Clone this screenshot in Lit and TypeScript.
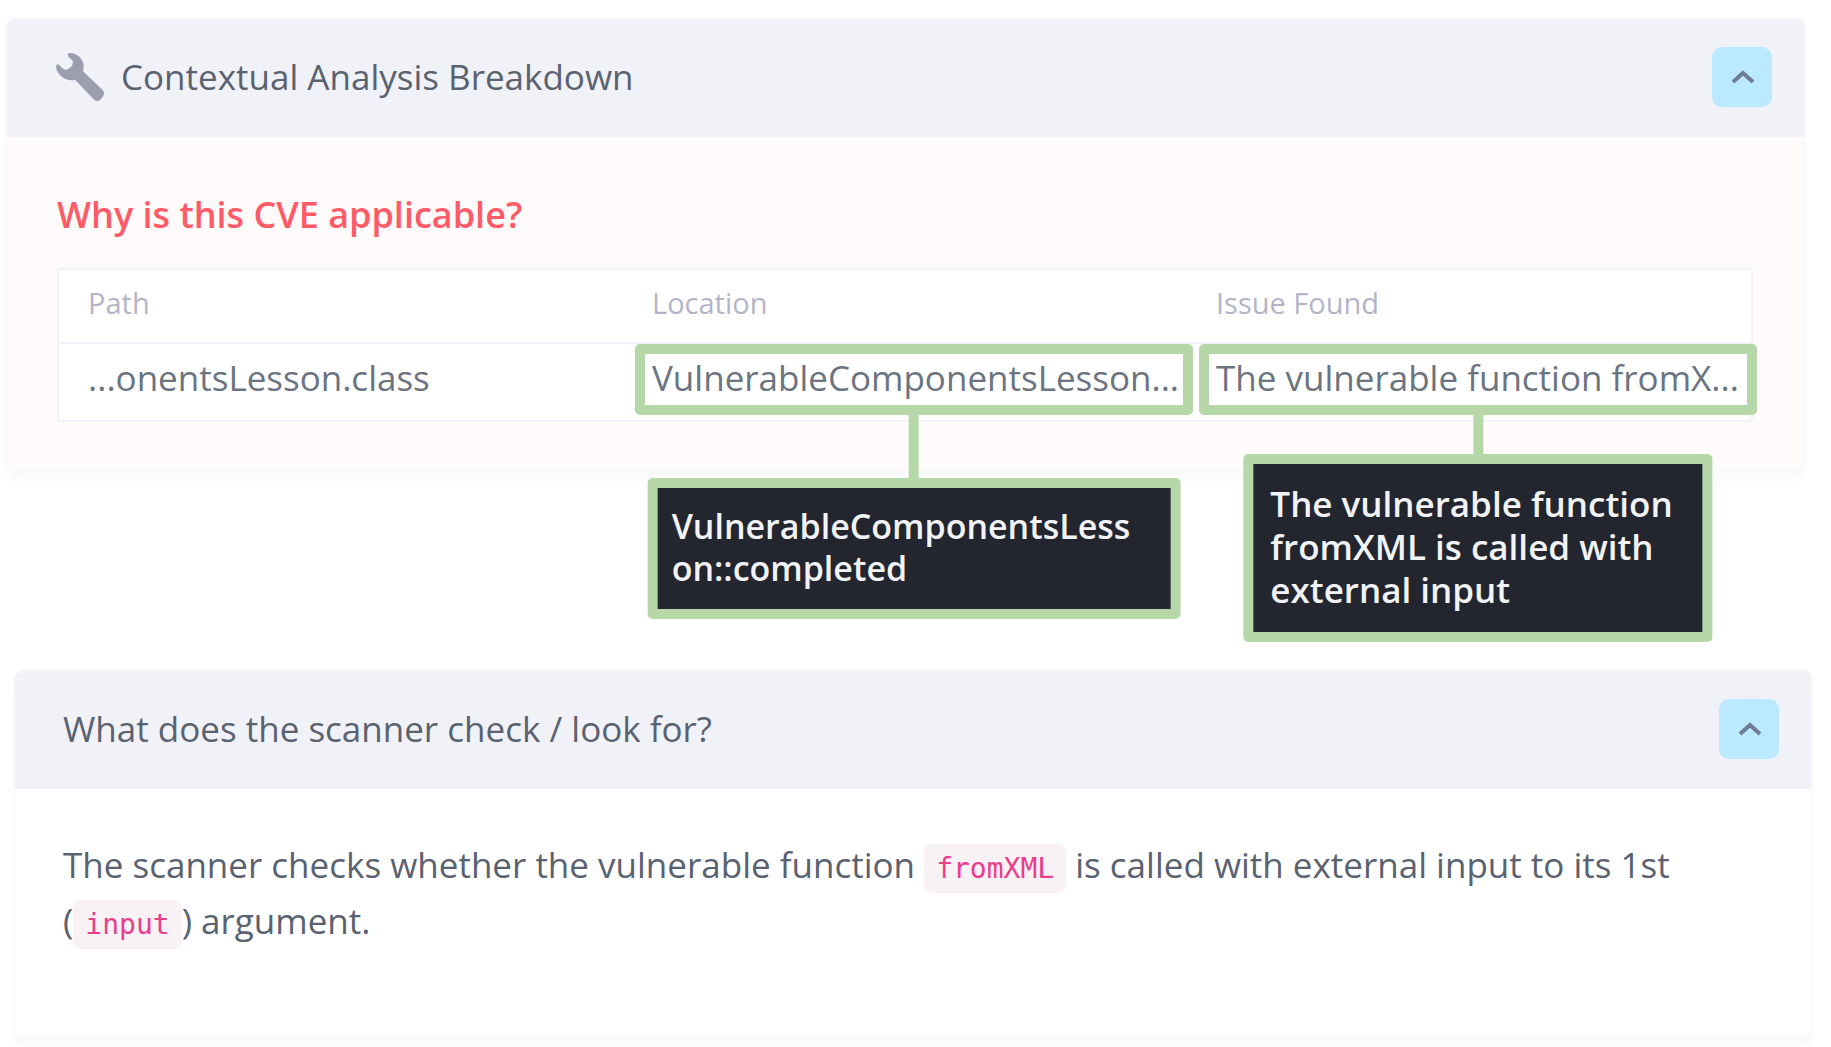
import { LitElement, html, css, svg, nothing } from "lit";
import { customElement, property, state } from "lit/decorators.js";

interface Finding {
  path: string;
  location: string;
  locationLines: string[];
  issue: string;
  issueLines: string[];
}

const findings: Finding[] = [
  {
    path: "...onentsLesson.class",
    location: "VulnerableComponentsLesson...",
    locationLines: ["VulnerableComponentsLess", "on::completed"],
    issue: "The vulnerable function fromX...",
    issueLines: ["The vulnerable function", "fromXML is called with", "external input"],
  },
];

const wrench = svg`<path d="M84 40 C98 36 118 46 127 64 C131 74 131 84 128 94 L187 150 C193 157 192 165 186 172 L180 179 C174 185 166 184 160 178 L104 119 C92 123 78 120 66 111 C53 101 45 87 48 75 Q51 71 56 74 L70 88 C77 91 85 88 91 82 C98 75 99 67 96 61 L84 50 Q80 44 84 40 Z"/>`;

/** A card with a shaded header and a button that folds its body away. */
@customElement("fold-panel")
export class FoldPanel extends LitElement {
  @property() heading = "";
  @property() tone = "plain";
  @property({ type: Boolean }) tool = false;
  @state() private open = true;

  static styles = css`
    :host {
      display: block;
      border-radius: 8px;
      box-shadow: 0 10px 8px #f8f9fa, 0 0 0 2px #f8f9fc;
    }
    .header {
      display: flex;
      align-items: center;
      gap: 16px;
      padding: 28px 32px 30px 48px;
      background: #f1f2f8;
      border-radius: 8px 8px 0 0;
    }
    .icon {
      width: 50px;
      height: 50px;
      fill: #9c9eb0;
      flex: none;
    }
    .heading {
      flex: 1;
      margin: 0;
      font-size: 35px;
      line-height: 60px;
      font-weight: 400;
      color: #5a6270;
    }
    .toggle {
      display: flex;
      align-items: center;
      justify-content: center;
      width: 60px;
      height: 60px;
      padding: 0;
      border: 0;
      border-radius: 10px;
      background: #bbe9ff;
      cursor: pointer;
    }
    .chevron {
      width: 26px;
      height: 16px;
      fill: none;
      stroke: #6f7c95;
      stroke-width: 4;
    }
    .closed .chevron {
      transform: rotate(180deg);
    }
    .body {
      padding: 48px;
      background: #ffffff;
      border-radius: 0 0 8px 8px;
    }
    .body.alert {
      padding-left: 50px;
      background: #fffbfa;
    }
  `;

  render() {
    return html`
      <header class="header ${this.open ? "" : "closed"}">
        ${this.tool
          ? html`<svg class="icon" viewBox="44 36 150 150" aria-hidden="true">${wrench}</svg>`
          : nothing}
        <h2 class="heading">${this.heading}</h2>
        <button
          class="toggle"
          type="button"
          aria-label=${this.heading}
          aria-expanded=${this.open ? "true" : "false"}
          @click=${() => (this.open = !this.open)}
        >
          <svg class="chevron" viewBox="0 0 26 16" aria-hidden="true">
            <path d="M4 13 L14 4 L24 13" />
          </svg>
        </button>
      </header>
      ${this.open ? html`<div class="body ${this.tone}"><slot></slot></div>` : nothing}
    `;
  }
}

@customElement("app-root")
export class AppRoot extends LitElement {
  static styles = css`
    :host {
      display: block;
      box-sizing: border-box;
      min-height: 100vh;
      padding: 19px 20px 11px 7px;
      background: #ffffff;
      font-family: "Open Sans", "Noto Sans", sans-serif;
      color: #5a6270;
    }
    .page {
      display: flex;
      flex-direction: column;
      gap: 201px;
    }
    .analysis {
      margin-right: 7px;
    }
    .scanner {
      margin-left: 8px;
    }
    .question {
      margin: 6px 0 29px;
      font-size: 36px;
      line-height: 48px;
      font-weight: 600;
      color: #ff5a67;
    }
    .findings {
      width: 100%;
      table-layout: fixed;
      border-collapse: separate;
      border-spacing: 0;
      border: 2px solid #f2f3fa;
      border-radius: 4px;
      background: #ffffff;
    }
    .frame {
      margin-right: 3px;
    }
    th,
    td {
      text-align: left;
      font-weight: 400;
      white-space: nowrap;
    }
    th {
      padding: 13px 4px 19px 29px;
      font-size: 29px;
      line-height: 40px;
      color: #b4b4c9;
      border-bottom: 2px solid #f2f3fa;
    }
    td {
      padding: 10px 4px 18px 29px;
      font-size: 35px;
      line-height: 48px;
      color: #6b7480;
    }
    .marked {
      position: relative;
    }
    .ring {
      position: absolute;
      inset: -10px -10px -13px -17px;
      border: 10px solid #b6d7a8;
      border-radius: 5px;
    }
    .callout {
      position: absolute;
      top: calc(100% + 10px);
      left: 50%;
      transform: translateX(-50%);
      display: flex;
      flex-direction: column;
      align-items: center;
    }
    .stem {
      width: 10px;
      height: 39px;
      background: #b6d7a8;
    }
    .note {
      padding: 18px 30px 21px 17px;
      border: 10px solid #b6d7a8;
      border-radius: 5px;
      background: #23262f;
      color: #f1f3f7;
      font-size: 35px;
      line-height: 43px;
      font-weight: 600;
    }
    .low .stem {
      height: 63px;
    }
    .low .note {
      padding: 17px 40px 20px 14px;
      font-size: 34px;
      line-height: 42px;
    }
    .line {
      display: block;
    }
    .text {
      margin: 0 0 39px;
      font-size: 35px;
      line-height: 56px;
    }
    code {
      padding: 8px 12px;
      border-radius: 8px;
      background: #f9f2f4;
      color: #e83e8c;
      font-family: "DejaVu Sans Mono", monospace;
      font-size: 28px;
      line-height: 28px;
    }
  `;

  private marked(label: string, lines: string[], depth: string) {
    return html`
      <div class="marked">
        ${label}
        <div class="ring">
          <div class="callout ${depth}" role="tooltip">
            <div class="stem"></div>
            <div class="note">
              ${lines.map((line) => html`<span class="line">${line}</span>`)}
            </div>
          </div>
        </div>
      </div>
    `;
  }

  render() {
    return html`
      <main class="page">
        <fold-panel class="analysis" heading="Contextual Analysis Breakdown" tone="alert" tool>
          <h3 class="question">Why is this CVE applicable?</h3>
          <div class="frame">
            <table class="findings">
              <thead>
                <tr>
                  <th scope="col">Path</th>
                  <th scope="col">Location</th>
                  <th scope="col">Issue Found</th>
                </tr>
              </thead>
              <tbody>
                ${findings.map(
                  (f) => html`
                    <tr>
                      <td>${f.path}</td>
                      <td>${this.marked(f.location, f.locationLines, "low")}</td>
                      <td>${this.marked(f.issue, f.issueLines, "high")}</td>
                    </tr>
                  `,
                )}
              </tbody>
            </table>
          </div>
        </fold-panel>
        <fold-panel class="scanner" heading="What does the scanner check / look for?">
          <p class="text">
            The scanner checks whether the vulnerable function <code>fromXML</code> is called with
            external input to its 1st (<code>input</code>) argument.
          </p>
        </fold-panel>
      </main>
    `;
  }
}
